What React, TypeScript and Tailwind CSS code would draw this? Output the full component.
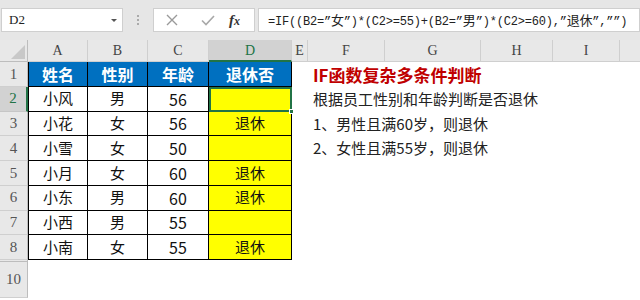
import React from "react";

const cjk = { fontFamily: '"Noto Sans CJK SC", "Noto Sans", sans-serif' };
const serif = { fontFamily: '"Liberation Serif", "Noto Sans CJK SC", serif' };

const rows = [
  ["小风", "男", "56", ""],
  ["小花", "女", "56", "退休"],
  ["小雪", "女", "50", ""],
  ["小月", "女", "60", "退休"],
  ["小东", "男", "60", "退休"],
  ["小西", "男", "55", ""],
  ["小南", "女", "55", "退休"],
];

const rightText: Record<number, React.ReactNode> = {
  1: <span className="text-[17px] font-bold text-[#c00000]">IF函数复杂多条件判断</span>,
  2: <span className="text-[15px] text-[#222]">根据员工性别和年龄判断是否退休</span>,
  3: <span className="text-[15px] text-[#222]">1、男性且满60岁，则退休</span>,
  4: <span className="text-[15px] text-[#222]">2、女性且满55岁，则退休</span>,
};

function RowHead({ n, sel }: { n: string; sel?: boolean }) {
  return (
    <div
      className={
        sel
          ? "w-[28px] shrink-0 flex items-center justify-center bg-[#d2d2d2] text-[#217346] text-[15px] border-b border-[#c6c6c6] border-r-2 border-r-[#217346]"
          : "w-[28px] shrink-0 flex items-center justify-center bg-[#e8e8e8] text-[#555] text-[15px] border-b border-[#cfcfcf] border-r border-r-[#bdbdbd]"
      }
      style={serif}
    >
      {n}
    </div>
  );
}

export default function App() {
  return (
    <div className="w-[640px] h-[300px] overflow-hidden bg-white relative" style={cjk}>
      {/* formula bar */}
      <div className="h-[40px] bg-[#e6e6e6] flex items-center">
        <div className="ml-[1px] w-[122px] h-[24px] bg-white border border-[#cfcfcf] flex items-center justify-between pl-[7px] pr-[5px]">
          <span className="text-[13px] text-[#222]" style={serif}>D2</span>
          <span className="w-0 h-0 border-l-[3px] border-r-[3px] border-t-[3px] border-l-transparent border-r-transparent border-t-[#555]" />
        </div>
        <div className="w-[30px] flex flex-col items-center justify-center gap-[2px]">
          <span className="w-[2px] h-[2px] bg-[#aaa]" />
          <span className="w-[2px] h-[2px] bg-[#aaa]" />
          <span className="w-[2px] h-[2px] bg-[#aaa]" />
        </div>
        <div className="w-[102px] h-[24px] bg-white border border-[#cfcfcf] flex items-center">
          <svg width="14" height="14" viewBox="0 0 14 14" className="ml-[11px]">
            <path d="M2 2 L12 12 M12 2 L2 12" stroke="#9a9a9a" strokeWidth="1.4" fill="none" />
          </svg>
          <svg width="16" height="14" viewBox="0 0 16 14" className="ml-[21px]">
            <path d="M2 7.5 L6 11.5 L14 3" stroke="#a8a8a8" strokeWidth="1.6" fill="none" />
          </svg>
          <span className="ml-[13px] text-[15px] italic font-bold text-[#333]" style={serif}>
            f<span className="text-[12px]">x</span>
          </span>
        </div>
        <div className="ml-[3px] flex-1 h-[24px] bg-white border border-[#cfcfcf] flex items-center pl-[9px] whitespace-nowrap text-[#222]">
          <span className="text-[12px] tracking-[-0.2px]" style={{ fontFamily: '"Liberation Mono", "Noto Sans CJK SC", monospace' }}>
            =IF((B2=”<span className="text-[13px]" style={cjk}>女</span>”)*(C2&gt;=55)+(B2=”<span className="text-[13px]" style={cjk}>男</span>”)*(C2&gt;=60),”<span className="text-[13px]" style={cjk}>退休</span>”,””)
          </span>
        </div>
      </div>

      {/* column header */}
      <div className="flex h-[22px] text-[14px] text-[#444]" style={serif}>
        <div className="w-[28px] shrink-0 bg-[#e8e8e8] border-r border-b border-[#bdbdbd] relative">
          <span className="absolute right-[2px] bottom-[2px] w-0 h-0" style={{ borderBottom: "14px solid #c8c8c8", borderLeft: "14px solid transparent" }} />
        </div>
        <div className="w-[60px] shrink-0 bg-[#e8e8e8] border-r border-b border-[#cfcfcf] flex items-center justify-center">A</div>
        <div className="w-[60px] shrink-0 bg-[#e8e8e8] border-r border-b border-[#cfcfcf] flex items-center justify-center">B</div>
        <div className="w-[61px] shrink-0 bg-[#e8e8e8] border-r border-b border-[#cfcfcf] flex items-center justify-center">C</div>
        <div className="w-[83px] shrink-0 bg-[#d2d2d2] border-r border-[#cfcfcf] border-b-2 border-b-[#217346] text-[#217346] flex items-center justify-center">D</div>
        <div className="w-[16px] shrink-0 bg-[#e8e8e8] border-r border-b border-[#cfcfcf] flex items-center justify-center">E</div>
        <div className="w-[77px] shrink-0 bg-[#e8e8e8] border-r border-b border-[#cfcfcf] flex items-center justify-center">F</div>
        <div className="w-[96px] shrink-0 bg-[#e8e8e8] border-r border-b border-[#cfcfcf] flex items-center justify-center">G</div>
        <div className="w-[72px] shrink-0 bg-[#e8e8e8] border-r border-b border-[#cfcfcf] flex items-center justify-center">H</div>
        <div className="w-[67px] shrink-0 bg-[#e8e8e8] border-r border-b border-[#cfcfcf] flex items-center justify-center">I</div>
        <div className="flex-1 bg-[#e8e8e8] border-b border-[#cfcfcf]" />
      </div>

      {/* row 1 */}
      <div className="flex h-[24.75px]">
        <RowHead n="1" />
        {["姓名", "性别", "年龄", "退休否"].map((t, i) => (
          <div
            key={i}
            className={
              (i === 0 ? "w-[60px] border-l " : i === 1 ? "w-[60px] " : i === 2 ? "w-[61px] " : "w-[83px] ") +
              "shrink-0 bg-[#0070c0] border-r border-b border-black flex items-center justify-center text-white font-bold text-[16px]"
            }
          >
            {t}
          </div>
        ))}
        <div className="w-[16px] shrink-0" />
        <div className="flex items-center pl-[5px] whitespace-nowrap">{rightText[1]}</div>
      </div>

      {rows.map((r, ri) => {
        const n = ri + 2;
        return (
          <div key={ri} className="flex h-[24.75px]">
            <RowHead n={String(n)} sel={n === 2} />
            <div className="w-[60px] shrink-0 border-l border-r border-b border-black flex items-center justify-center text-[15px] text-[#111]">{r[0]}</div>
            <div className="w-[60px] shrink-0 border-r border-b border-black flex items-center justify-center text-[15px] text-[#111]">{r[1]}</div>
            <div className="w-[61px] shrink-0 border-r border-b border-black flex items-center justify-center text-[16px] text-[#111]">{r[2]}</div>
            {n === 2 ? (
              <div className="w-[83px] shrink-0 bg-[#ffff00] border-2 border-[#217346] relative flex items-center justify-center">
                <span className="absolute right-[-4px] bottom-[-4px] w-[5px] h-[5px] bg-[#217346] border border-white" />
              </div>
            ) : (
              <div className="w-[83px] shrink-0 bg-[#ffff00] border-r border-b border-black flex items-center justify-center text-[15px] text-[#111]">{r[3]}</div>
            )}
            <div className="w-[16px] shrink-0" />
            <div className="flex items-center pl-[5px] whitespace-nowrap">{rightText[n]}</div>
          </div>
        );
      })}

      {/* hidden row 9 */}
      <div className="flex h-[2px]">
        <div className="w-[28px] shrink-0 bg-[#e8e8e8] border-b border-r border-[#bdbdbd]" />
      </div>
      {/* row 10 */}
      <div className="flex h-[36px]">
        <RowHead n="10" />
      </div>
    </div>
  );
}
